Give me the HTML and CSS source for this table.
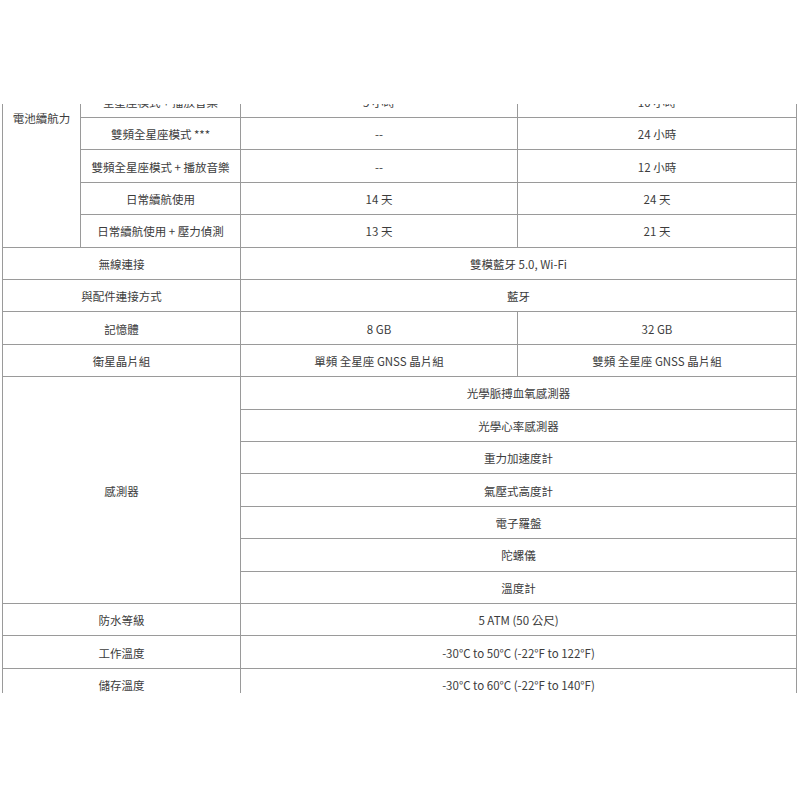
FILE: index.html
```html
<!DOCTYPE html>
<html lang="zh-Hant">
<head>
<meta charset="utf-8">
<title>規格</title>
<link rel="stylesheet" href="styles.css">
</head>
<body>
<div class="clip">
<table class="spec">
<colgroup><col class="c1"><col class="c2"><col class="c3"><col class="c4"></colgroup>
<tbody>
<tr><td rowspan="8" class="lab">電池續航力</td><td>智慧模式</td><td>14 天</td><td>24 天</td></tr>
<tr><td>僅 GPS 模式</td><td>18 小時</td><td>50 小時</td></tr>
<tr><td>全星座模式</td><td>8 小時</td><td>32 小時</td></tr>
<tr><td>全星座模式 + 播放音樂</td><td>5 小時</td><td>10 小時</td></tr>
<tr><td>雙頻全星座模式 ***</td><td>--</td><td>24 小時</td></tr>
<tr><td>雙頻全星座模式 + 播放音樂</td><td>--</td><td>12 小時</td></tr>
<tr><td>日常續航使用</td><td>14 天</td><td>24 天</td></tr>
<tr><td>日常續航使用 + 壓力偵測</td><td>13 天</td><td>21 天</td></tr>
<tr><td colspan="2">無線連接</td><td colspan="2">雙模藍牙 5.0, Wi-Fi</td></tr>
<tr><td colspan="2">與配件連接方式</td><td colspan="2">藍牙</td></tr>
<tr><td colspan="2">記憶體</td><td>8 GB</td><td>32 GB</td></tr>
<tr><td colspan="2">衛星晶片組</td><td>單頻 全星座 GNSS 晶片組</td><td>雙頻 全星座 GNSS 晶片組</td></tr>
<tr><td colspan="2" rowspan="7">感測器</td><td colspan="2">光學脈搏血氧感測器</td></tr>
<tr><td colspan="2">光學心率感測器</td></tr>
<tr><td colspan="2">重力加速度計</td></tr>
<tr><td colspan="2">氣壓式高度計</td></tr>
<tr><td colspan="2">電子羅盤</td></tr>
<tr><td colspan="2">陀螺儀</td></tr>
<tr><td colspan="2">溫度計</td></tr>
<tr><td colspan="2">防水等級</td><td colspan="2">5 ATM (50 公尺)</td></tr>
<tr><td colspan="2">工作溫度</td><td colspan="2">-30°C to 50°C (-22°F to 122°F)</td></tr>
<tr><td colspan="2">儲存溫度</td><td colspan="2">-30°C to 60°C (-22°F to 140°F)</td></tr>
</tbody>
</table>
</div>
</body>
</html>
```

FILE: styles.css
```css
html, body {
  margin: 0;
  padding: 0;
  background: #fff;
}

.clip {
  margin-top: 104px;
  height: 589px;
  overflow: hidden;
}

.spec {
  margin-top: -116.5px;
  margin-left: 2px;
  width: 794px;
  table-layout: fixed;
  border-collapse: collapse;
  font-family: "Noto Sans CJK TC", "Noto Sans", sans-serif;
  font-size: 11.5px;
  color: #3c3c3c;
}

.c1 { width: 78px; }
.c2 { width: 160px; }
.c3 { width: 277px; }
.c4 { width: 279px; }

.spec td {
  border: 1px solid #9a9a9a;
  height: 32.4px;
  padding: 1px 4px 0;
  box-sizing: border-box;
  text-align: center;
  vertical-align: middle;
  line-height: 16px;
  white-space: nowrap;
}
```
